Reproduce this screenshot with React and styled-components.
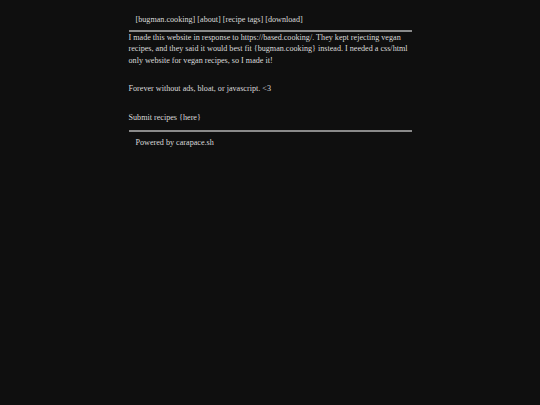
import React from "react"
import styled, { createGlobalStyle } from "styled-components"

const Global = createGlobalStyle`
  html, body {
    margin: 0;
    background: #0f0f0f;
    min-height: 100%;
  }
  body {
    font-family: "Liberation Serif", "Times New Roman", serif;
    color: #dadada;
    font-size: 8.15px;
  }
`;

const Page = styled.div`
  width: 283px;
  margin: 0 auto;
  padding-top: 14px;
`;

const Nav = styled.nav`
  padding: 0 7px 4px;
  line-height: 11.5px;
`;

const NavLink = styled.a`
  color: inherit;
  text-decoration: none;
`;

const Rule = styled.hr`
  border: none;
  height: 2px;
  background: #8a8a8a;
  margin: 0;
`;

const Main = styled.main`
  padding: 0 0 7px;
`;

const Para = styled.p`
  margin: 0 0 ${p => p.$gap ?? 17}px;
  line-height: 11.5px;
`;

const Footer = styled.footer`
  padding: 5px 7px;
  line-height: 11.5px;
`;

export default function App() {
  return (
    <>
      <Global />
      <Page>
        <Nav>
          <NavLink href="#">[bugman.cooking]</NavLink>{" "}
          <NavLink href="#">[about]</NavLink>{" "}
          <NavLink href="#">[recipe tags]</NavLink>{" "}
          <NavLink href="#">[download]</NavLink>
        </Nav>
        <Rule />
        <Main>
          <Para>
            I made this website in response to https://based.cooking/. They kept rejecting vegan
            recipes, and they said it would best fit {"{bugman.cooking}"} instead. I needed a css/html
            only website for vegan recipes, so I made it!
          </Para>
          <Para>Forever without ads, bloat, or javascript. &lt;3</Para>
          <Para $gap={0}>Submit recipes {"{here}"}</Para>
        </Main>
        <Rule />
        <Footer>Powered by carapace.sh</Footer>
      </Page>
    </>
  )
}
